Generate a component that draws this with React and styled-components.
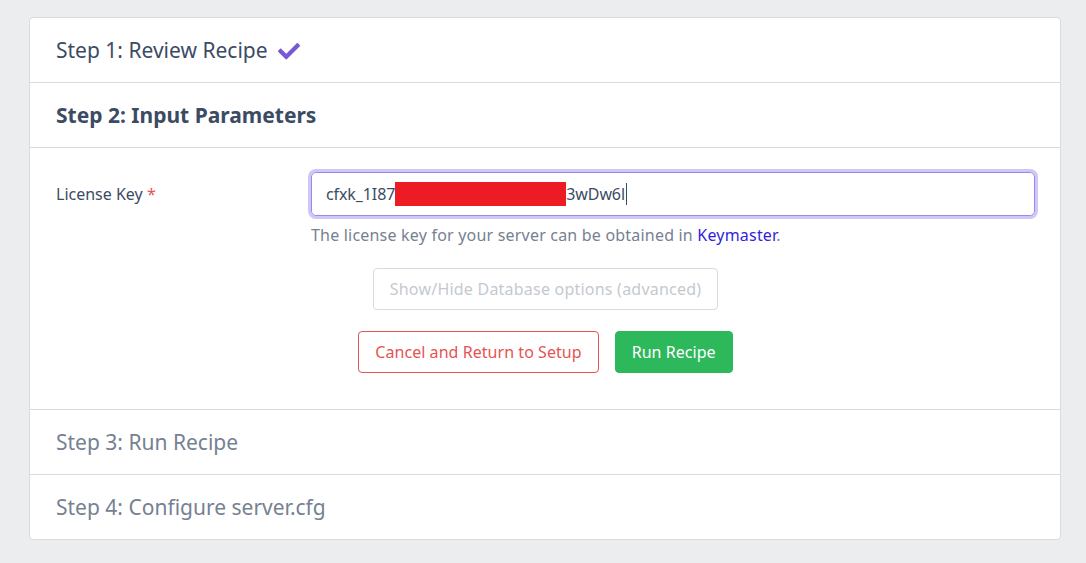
import React from "react";
import styled, { createGlobalStyle } from "styled-components";

const GlobalStyle = createGlobalStyle`
  html, body { margin: 0; padding: 0; background: #ebedef; }
  body { font-family: "Noto Sans", "Open Sans", Arial, sans-serif; color: #3c4b64; }
  * { box-sizing: border-box; }
`;

const Page = styled.div`
  padding: 17px 25px 23px 29px;
`;

const Card = styled.div`
  background: #fff;
  border: 1px solid #d8dbe0;
  border-radius: 4px;
  overflow: hidden;
`;

const StepHeader = styled.div`
  height: ${(p) => (p.$last ? "64px" : "65px")};
  display: flex;
  align-items: center;
  gap: 10px;
  padding: 0 26px;
  border-bottom: ${(p) => (p.$last ? "none" : "1px solid #d8dbe0")};
  font-size: 21px;
  font-weight: ${(p) => (p.$active ? 700 : 400)};
  color: ${(p) => (p.$muted ? "#768192" : "#3c4b64")};
`;

const Check = styled.svg`
  width: 22px;
  height: 18px;
  fill: #7759d3;
  margin-top: 2px;
`;

const Body = styled.div`
  padding: 24px 25px 36px 26px;
  border-bottom: 1px solid #d8dbe0;
`;

const FieldRow = styled.div`
  display: grid;
  grid-template-columns: 255px 1fr;
  align-items: start;
`;

const Label = styled.label`
  font-size: 16px;
  line-height: 44px;
  color: #3c4b64;
`;

const Required = styled.span`
  color: #e55353;
`;

const FieldCol = styled.div`
  display: flex;
  flex-direction: column;
`;

const InputBox = styled.div`
  height: 44px;
  border: 1px solid #958bef;
  border-radius: 5px;
  box-shadow: 0 0 0 3px #cdc8f7;
  display: flex;
  align-items: center;
  padding: 0 14px;
  font-size: 16px;
  color: #3c4b64;
  letter-spacing: -0.1px;
`;

const Redaction = styled.span`
  display: inline-block;
  width: 171px;
  height: 24px;
  background: #ed1c24;
`;

const Caret = styled.span`
  display: inline-block;
  width: 1px;
  height: 22px;
  background: #3c4b64;
  margin-left: 1px;
`;

const Help = styled.div`
  margin-top: 7px;
  font-size: 16px;
  line-height: 24px;
  color: #768192;
  letter-spacing: 0.2px;
`;

const Link = styled.a`
  color: #321fdb;
  text-decoration: none;
`;

const ButtonStack = styled.div`
  display: flex;
  flex-direction: column;
  align-items: center;
  gap: 21px;
  margin-top: 21px;
`;

const ButtonRow = styled.div`
  display: flex;
  gap: 16px;
`;

const Button = styled.button`
  height: 42px;
  padding: 0 16px;
  border-radius: 4px;
  font-family: inherit;
  font-size: 16px;
  letter-spacing: ${(p) => (p.$variant ? "0.05px" : "0.22px")};
  background: ${(p) => (p.$variant === "success" ? "#2eb85c" : "#fff")};
  border: 1px solid
    ${(p) =>
      p.$variant === "success"
        ? "#2eb85c"
        : p.$variant === "danger"
        ? "#e55353"
        : "#d8dbe0"};
  color: ${(p) =>
    p.$variant === "success"
      ? "#fff"
      : p.$variant === "danger"
      ? "#e55353"
      : "#c4c9d0"};
`;

export default function App() {
  return (
    <>
      <GlobalStyle />
      <Page>
        <Card>
          <StepHeader>
            Step 1: Review Recipe
            <Check viewBox="0 0 512 420">
              <path d="M173.898 399.404l-166.4-166.4c-9.997-9.997-9.997-26.206 0-36.204l36.203-36.204c9.997-9.998 26.207-9.998 36.204 0L192 272.69 432.095 32.596c9.997-9.997 26.207-9.997 36.204 0l36.203 36.204c9.997 9.997 9.997 26.206 0 36.204l-294.4 294.401c-9.998 9.997-26.207 9.997-36.204-.001z" />
            </Check>
          </StepHeader>
          <StepHeader $active>Step 2: Input Parameters</StepHeader>
          <Body>
            <FieldRow>
              <Label>
                License Key <Required>*</Required>
              </Label>
              <FieldCol>
                <InputBox>
                  cfxk_1I87
                  <Redaction />
                  3wDw6l
                  <Caret />
                </InputBox>
                <Help>
                  The license key for your server can be obtained in{" "}
                  <Link href="#">Keymaster</Link>.
                </Help>
              </FieldCol>
            </FieldRow>
            <ButtonStack>
              <Button>Show/Hide Database options (advanced)</Button>
              <ButtonRow>
                <Button $variant="danger">Cancel and Return to Setup</Button>
                <Button $variant="success">Run Recipe</Button>
              </ButtonRow>
            </ButtonStack>
          </Body>
          <StepHeader $muted>Step 3: Run Recipe</StepHeader>
          <StepHeader $muted $last>Step 4: Configure server.cfg</StepHeader>
        </Card>
      </Page>
    </>
  );
}
